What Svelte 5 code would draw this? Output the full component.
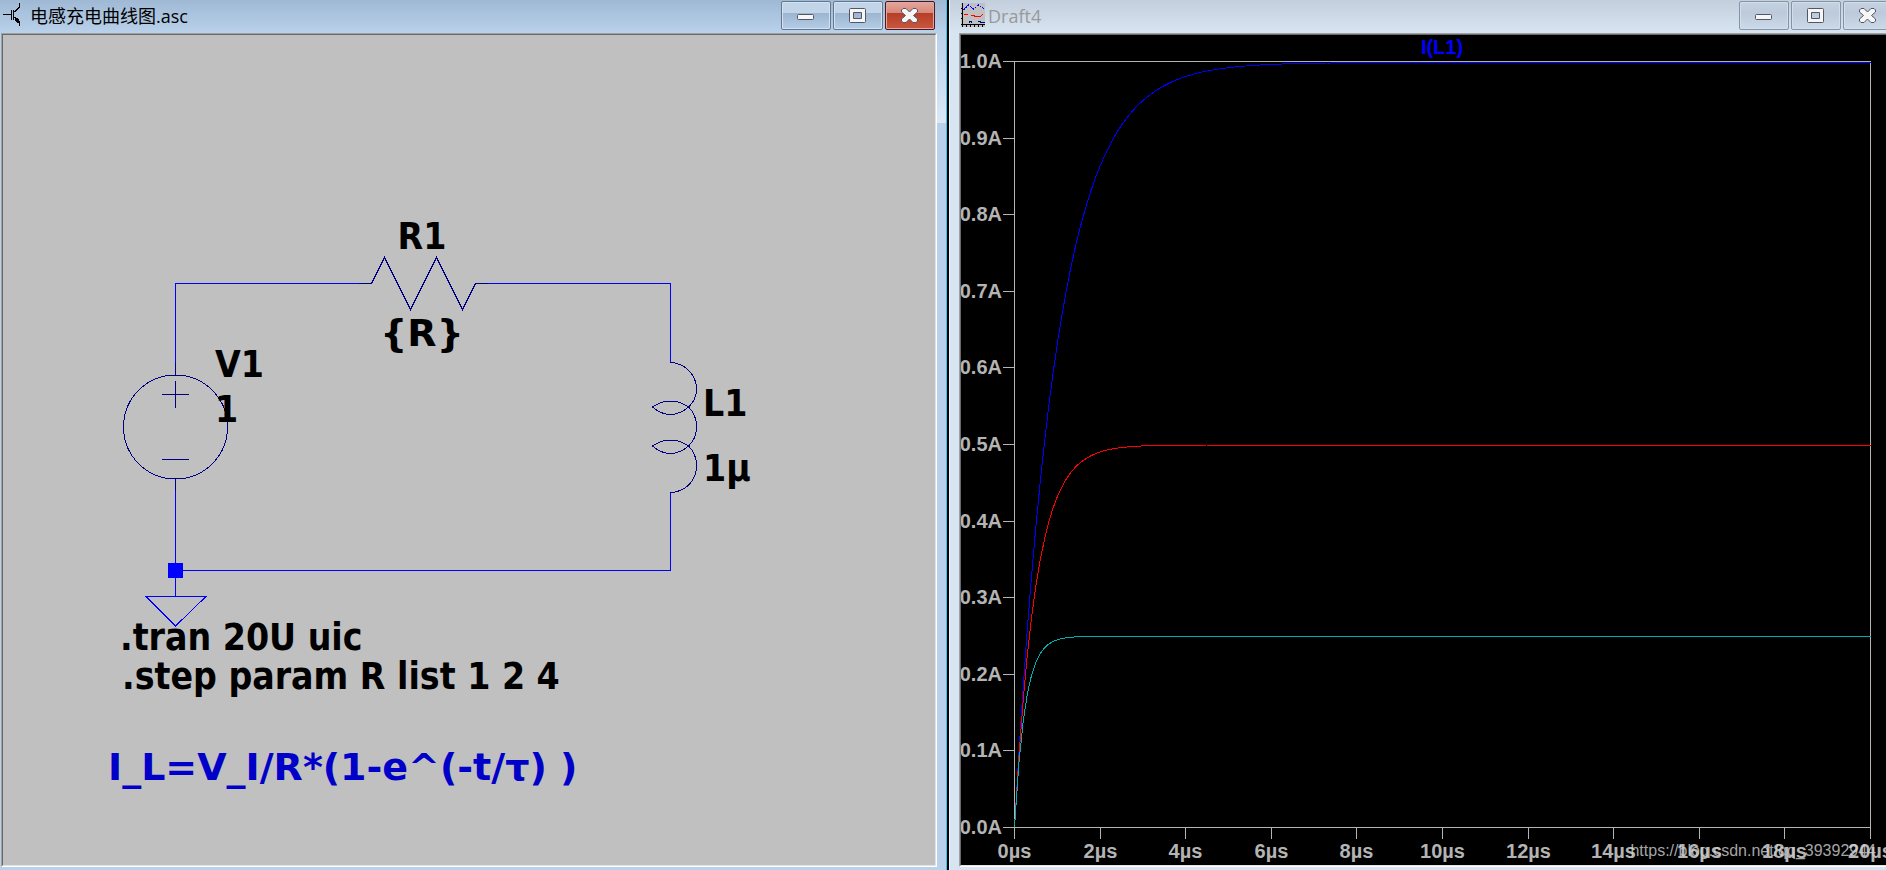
<script>
	const legend = 'I(L1)';
	const watermark = 'https://blog.csdn.net/qq_39392944';

	const traces = [
		{ resistance: 1, color: '#0000ff' },
		{ resistance: 2, color: '#ff0000' },
		{ resistance: 4, color: '#00b0b0' }
	];

	// space kept round the plotting area for the axis labels
	const margin = { top: 26, right: 23, bottom: 38, left: 53 };
	const endTime = 20;
	const samples = 200;

	let paneWidth = $state(932);
	let paneHeight = $state(830);

	let plotRight = $derived(paneWidth - margin.right);
	let plotBottom = $derived(paneHeight - margin.bottom);

	let xTicks = $derived(
		Array.from({ length: 11 }, (_, i) => ({ x: xAt(i * 2), label: `${i * 2}µs` }))
	);
	let yTicks = $derived(
		Array.from({ length: 11 }, (_, i) => ({ y: yAt(i / 10), label: `${(i / 10).toFixed(1)}A` }))
	);

	function xAt(time) {
		return Math.round(margin.left + (time / endTime) * (plotRight - margin.left)) + 0.5;
	}

	function yAt(current) {
		return Math.round(plotBottom - current * (plotBottom - margin.top)) + 0.5;
	}

	// inductor current for a 1 V step through R into 1 µH
	function tracePoints(resistance) {
		const points = [];
		for (let i = 0; i <= samples; i++) {
			const time = (i / samples) * endTime;
			const current = (1 - Math.exp(-resistance * time)) / resistance;
			const x = margin.left + 0.5 + (time / endTime) * (plotRight - margin.left);
			const y = plotBottom + 0.5 - current * (plotBottom - margin.top - 1);
			points.push(`${x.toFixed(1)},${y.toFixed(1)}`);
		}
		return points.join(' ');
	}
</script>

{#snippet windowButtons()}
	<div class="buttons">
		<button aria-label="Minimize">
			<svg width="20" height="18" viewBox="0 0 20 18">
				<rect x="1.5" y="7.5" width="16" height="5" rx="1" fill="#f6f6f6" stroke="#535666" />
			</svg>
		</button>
		<button aria-label="Maximize">
			<svg width="20" height="18" viewBox="0 0 20 18">
				<path
					d="M2.5 1.5h14a1 1 0 0 1 1 1v12a1 1 0 0 1-1 1h-14a1 1 0 0 1-1-1v-12a1 1 0 0 1 1-1zM5.5 5.5v6h8v-6z"
					fill="#f6f6f6"
					fill-rule="evenodd"
					stroke="#535666"
				/>
			</svg>
		</button>
		<button class="close" aria-label="Close">
			<svg width="20" height="18" viewBox="0 0 20 18">
				<path
					d="M3 1.5h3l3.5 3.500 3.500-3.500h3l1.500 1.500v2L13.500 8.500l4 3.500v2L16 15.500h-3l-3.500-3.500-3.500 3.500H3L1.500 14v-2l4-3.500L1.500 5V3z"
					fill="#f6f6f6"
					stroke="#535666"
				/>
			</svg>
		</button>
	</div>
{/snippet}

<main class="workspace">
	<section class="window active">
		<header class="titlebar">
			<svg class="icon" width="24" height="24" viewBox="0 0 24 24" shape-rendering="crispEdges">
				<path d="M0 11.500h9M11.500 9l5-5V0M11.500 14l5 5v4" fill="none" stroke="#000" />
				<path d="M8.500 7v10M10.500 7v10" stroke="#000" fill="none" />
				<path d="M12 16l3-1 2 4v2l-4-2z" />
			</svg>
			<h1>电感充电曲线图.asc</h1>
			{@render windowButtons()}
		</header>
		<div class="frame">
			<div class="client schematic">
				<svg viewBox="3 35 932 830" preserveAspectRatio="xMinYMin slice">
					<g class="wires">
						<path d="M175.500 364V283.500H359M487 283.500H670.500V362M670.500 493V570.500H175.500V491" />
						<path d="M175.500 570V596.500M146 596.500H206L175.500 626Z" />
						<rect x="168" y="563" width="15" height="15" />
					</g>
					<g class="symbols">
						<path
							d="M359 283.500H371.500L384.500 257.500L410.500 309.500L436.500 257.500L462.500 309.500L475.500 283.500H488"
						/>
						<path d="M175.500 363V375M175.500 478V491" />
						<circle cx="175.500" cy="427" r="52" />
						<path d="M162 394.500H189M175.500 381V408M162 459.500H189" />
						<path
							d="M670.500 362.500C686 363 696.500 376 696.500 389C696.500 396 694 402 688.500 407C677 417 664 417 652.500 407C664 399 677 399 688.500 407C694 412 696.500 419 696.500 427C696.500 435 694 441 688.500 446C677 456 664 456 652.500 446C664 438 677 438 688.500 446C694 451 696.500 459 696.500 466C696.500 480 686 492 670.500 492.500"
						/>
					</g>
					<g class="labels">
						<text class="centered" x="422" y="249">R1</text>
						<text class="centered wide" x="422" y="346">{'{R}'}</text>
						<text x="215" y="377">V1</text>
						<text x="215" y="422">1</text>
						<text x="703" y="416">L1</text>
						<text x="703" y="481">1µ</text>
						<text x="120" y="650">.tran 20U uic</text>
						<text x="122" y="689">.step param R list 1 2 4</text>
						<text class="formula wide" x="108" y="780">I_L=V_I/R*(1-e^(-t/τ) )</text>
					</g>
				</svg>
			</div>
		</div>
	</section>

	<section class="window inactive">
		<header class="titlebar">
			<svg class="icon" width="24" height="24" viewBox="0 0 24 24" shape-rendering="crispEdges">
				<rect width="24" height="24" fill="#c0c0c0" />
				<path d="M1.500 0v24M0 21.500h24" fill="none" stroke="#000" />
				<path
					d="M0 5.500h2M0 10.500h2M0 15.500h2M5.500 21v3M9.500 21v3M13.500 21v3M17.500 21v3M21.500 21v3"
					fill="none"
					stroke="#000"
				/>
				<path d="M2.500 7l5-5 5 4 5-4 6 4" fill="none" stroke="#00f" stroke-dasharray="2 1" />
				<path d="M3 11.500h4M10 12.500h2l3 1h4l3-2" fill="none" stroke="#f00" />
				<path d="M8.500 20v-2h2v2M17 18.500h2v1h5" fill="none" stroke="#000090" />
			</svg>
			<h1>Draft4</h1>
			{@render windowButtons()}
		</header>
		<div class="frame">
			<div class="client plot" bind:clientWidth={paneWidth} bind:clientHeight={paneHeight}>
				<svg>
					<g class="axes">
						<rect
							x={margin.left + 0.5}
							y={margin.top + 0.5}
							width={plotRight - margin.left}
							height={plotBottom - margin.top}
						/>
						{#each yTicks as tick}
							<line x1={margin.left - 11} x2={margin.left} y1={tick.y} y2={tick.y} />
						{/each}
						{#each xTicks as tick}
							<line x1={tick.x} x2={tick.x} y1={plotBottom} y2={plotBottom + 12} />
						{/each}
					</g>
					<g class="traces">
						{#each traces as trace}
							<polyline points={tracePoints(trace.resistance)} stroke={trace.color} />
						{/each}
					</g>
					<g class="axis-labels">
						{#each yTicks as tick}
							<text x={margin.left - 12} y={tick.y + 6} text-anchor="end">{tick.label}</text>
						{/each}
						{#each xTicks as tick}
							<text x={tick.x} y={plotBottom + 31} text-anchor="middle">{tick.label}</text>
						{/each}
						<text class="legend" x={(margin.left + plotRight) / 2} y="19" text-anchor="middle">
							{legend}
						</text>
					</g>
				</svg>
			</div>
		</div>
	</section>
	<span class="watermark">{watermark}</span>
</main>

<style>
	:global(body) {
		margin: 0;
	}

	.workspace {
		position: relative;
		display: grid;
		grid-template-columns: 949fr 937fr;
		height: 100vh;
		overflow: hidden;
		background: #000;
		font-family: 'Open Sans', 'Noto Sans CJK SC', sans-serif;
	}

	.window {
		display: flex;
		flex-direction: column;
		box-sizing: border-box;
		min-width: 0;
	}

	.active {
		margin-right: 2px;
		padding: 0 9px 3px 1px;
		border-right: 1px solid #2cc8f0;
		background:
			linear-gradient(#b9d1ea, #dbe8f6) right 35px / 9px 88px no-repeat,
			linear-gradient(#9fb9d5, #b9d1ea) 0 0 / 100% 33px no-repeat,
			#b9d1ea;
	}

	/* runs past the right edge of the workspace */
	.inactive {
		margin-right: -19px;
		padding: 0 10px 3px 9px;
		border-left: 1px solid #eef3f8;
		background: linear-gradient(#c3cfdc, #d7e4f2) 0 0 / 100% 33px no-repeat #d7e4f2;
	}

	.titlebar {
		display: flex;
		align-items: flex-start;
		gap: 3px;
		height: 33px;
		flex: none;
	}

	.icon {
		flex: none;
		margin: 3px 0 0 2px;
	}

	h1 {
		flex: 1;
		margin: 0;
		overflow: hidden;
		font-size: 18px;
		line-height: 32px;
		font-weight: 400;
		white-space: nowrap;
	}

	.inactive h1 {
		color: #999;
	}

	.buttons {
		display: flex;
		gap: 2px;
		margin: 1px 2px 0 0;
	}

	button {
		display: grid;
		place-items: center;
		width: 50px;
		height: 29px;
		padding: 0;
		border: 1px solid #64778f;
		border-radius: 2px;
		background: linear-gradient(#c1d4e8 0 40%, #9cb5d0 42%, #b5cde6);
		box-shadow: inset 0 0 0 1px #d3e2f1;
	}

	.active .close {
		border-color: #4a1820;
		background: linear-gradient(#e5a69b, #d6887b 40%, #b73e27 42%, #c8573f);
		box-shadow: inset 0 0 0 1px #e4a497;
	}

	.inactive button {
		border-color: #8493a6;
		background: linear-gradient(#c5d2e1, #bccadb 40%, #bccadb 42%, #cbd9e8);
		box-shadow: inset 0 0 0 1px #d2deea;
	}

	.frame {
		display: flex;
		flex: 1;
		min-height: 0;
		border: 1px solid;
		border-color: #a0a0a0 #fff #fff #a0a0a0;
	}

	.client {
		flex: 1;
		min-width: 0;
		overflow: hidden;
		border: 1px solid;
		border-color: #696969 #e3e3e3 #e3e3e3 #696969;
	}

	.client svg {
		display: block;
		width: 100%;
		height: 100%;
	}

	.schematic {
		background: #c0c0c0;
	}

	.wires,
	.symbols {
		fill: none;
		shape-rendering: crispEdges;
	}

	.wires {
		stroke: #0000ff;
	}

	.wires rect {
		fill: #0000ff;
		stroke: none;
	}

	.symbols {
		stroke: #000080;
	}

	.labels {
		font-family: 'DejaVu Sans Condensed', 'DejaVu Sans', sans-serif;
		font-size: 37px;
		font-weight: 700;
	}

	.centered {
		text-anchor: middle;
	}

	.wide {
		font-family: 'DejaVu Sans', sans-serif;
		font-size: 38px;
	}

	.formula {
		fill: #0000c8;
	}

	.plot {
		background: #000;
	}

	.axes {
		fill: none;
		stroke: #b4b4b4;
		shape-rendering: crispEdges;
	}

	.traces {
		fill: none;
		shape-rendering: crispEdges;
	}

	.axis-labels {
		fill: #b4b4b4;
		font-family: 'Liberation Sans', Arial, sans-serif;
		font-size: 20px;
		font-weight: 700;
	}

	.legend {
		fill: #0000ff;
	}

	/* stamped over the finished picture */
	.watermark {
		position: absolute;
		right: 10px;
		bottom: 9px;
		color: rgba(210, 210, 210, 0.8);
		font-family: 'Liberation Sans', Arial, sans-serif;
		font-size: 16px;
		line-height: 20px;
	}
</style>
